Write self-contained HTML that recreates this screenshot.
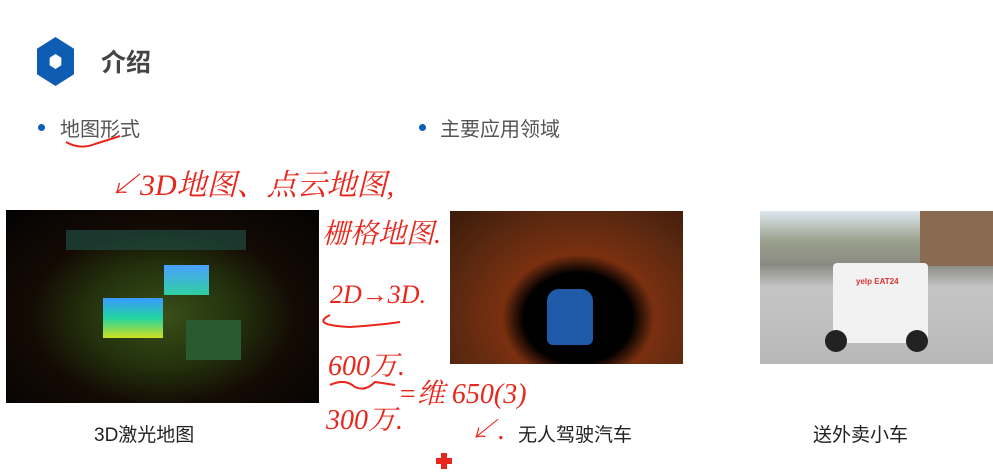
<!DOCTYPE html>
<html><head><meta charset="utf-8"><style>
body{margin:0;width:993px;height:476px;background:#fff;position:relative;overflow:hidden;font-family:"Liberation Sans","Noto Sans CJK SC",sans-serif}
.a{position:absolute}
.hw{position:absolute;color:#e8261c;font-family:"Liberation Serif","Noto Serif CJK SC",serif;font-style:italic;white-space:nowrap}
</style></head><body>
<svg class="a" style="left:36px;top:37px" width="39" height="49" viewBox="0 0 40 46" preserveAspectRatio="none"><polygon points="20,0 39,11 39,35 20,46 1,35 1,11" fill="#0f5cb3"/><polygon points="20,16 26,19.5 26,26.5 20,30 14,26.5 14,19.5" fill="#fff"/></svg>
<div class="a" style="left:101px;top:43px;font-size:25px;font-weight:bold;color:#444">介绍</div>
<div class="a" style="left:38px;top:124px;width:7px;height:7px;border-radius:50%;background:#0f5cb3"></div>
<div class="a" style="left:60px;top:113px;font-size:20px;color:#555">地图形式</div>
<div class="a" style="left:419px;top:124px;width:7px;height:7px;border-radius:50%;background:#0f5cb3"></div>
<div class="a" style="left:440px;top:113px;font-size:20px;color:#555">主要应用领域</div>
<svg class="a" style="left:0;top:0" width="993" height="476">
<path d="M66 142 Q80 150 95 144 Q108 140 120 136" stroke="#e8261c" stroke-width="2" fill="none"/>
<path d="M330 315 Q310 325 350 327 Q380 325 400 322" stroke="#e8261c" stroke-width="2" fill="none"/>
<path d="M330 385 Q345 378 355 387 Q365 392 375 382 L395 385" stroke="#e8261c" stroke-width="2" fill="none"/>
</svg>
<div class="hw" style="left:110px;top:160px;font-size:30px">↙3D地图、点云地图,</div>
<div class="hw" style="left:322px;top:212px;font-size:28px">栅格地图.</div>
<div class="hw" style="left:330px;top:280px;font-size:26px">2D→3D.</div>
<div class="hw" style="left:328px;top:344px;font-size:28px">600万.</div>
<div class="hw" style="left:398px;top:372px;font-size:28px">=维 650(3)</div>
<div class="hw" style="left:326px;top:398px;font-size:28px">300万.</div>
<div class="hw" style="left:470px;top:408px;font-size:28px">↙.</div>
<div class="a" style="left:6px;top:210px;width:313px;height:193px;background:radial-gradient(ellipse at 50% 55%,#3a5018 0%,#22300c 35%,#140a04 60%,#030303 100%)">
 <div class="a" style="left:60px;top:20px;width:180px;height:20px;background:#1f4a40;opacity:.7"></div>
 <div class="a" style="left:97px;top:88px;width:60px;height:40px;background:linear-gradient(#3a9aff,#22d4a0,#d0e020)"></div>
 <div class="a" style="left:158px;top:55px;width:45px;height:30px;background:linear-gradient(#4aa0ff,#30d0a0)"></div>
 <div class="a" style="left:180px;top:110px;width:55px;height:40px;background:#2a5a30"></div>
</div>
<div class="a" style="left:450px;top:211px;width:233px;height:153px;background:radial-gradient(ellipse at 55% 70%,#000 0%,#000 30%,#7a3010 42%,#5a2810 70%,#3a1a08 100%)">
 <div class="a" style="left:97px;top:78px;width:46px;height:56px;background:#1e5aa8;border-radius:12px 12px 6px 6px"></div>
</div>
<div class="a" style="left:760px;top:211px;width:233px;height:153px;background:linear-gradient(#dde6ee 0%,#9aa08a 20%,#8a8a84 35%,#c5c5c5 50%,#b8b8b8 100%)">
 <div class="a" style="left:160px;top:0;width:73px;height:55px;background:#8a6a50"></div>
 <div class="a" style="left:73px;top:52px;width:95px;height:80px;background:#f2f2f2;border-radius:4px"></div>
 <div class="a" style="left:96px;top:66px;font-size:8px;font-weight:bold;color:#d33">yelp EAT24</div>
 <div class="a" style="left:65px;top:119px;width:22px;height:22px;border-radius:50%;background:#222"></div>
 <div class="a" style="left:146px;top:119px;width:22px;height:22px;border-radius:50%;background:#222"></div>
</div>
<div class="a" style="left:94px;top:420px;font-size:19px;color:#222">3D激光地图</div>
<div class="a" style="left:518px;top:420px;font-size:19px;color:#222">无人驾驶汽车</div>
<div class="a" style="left:813px;top:420px;font-size:19px;color:#222">送外卖小车</div>
<div class="a" style="left:436px;top:458px;width:16px;height:6px;background:#e8261c"></div>
<div class="a" style="left:441px;top:453px;width:6px;height:16px;background:#e8261c"></div>
</body></html>
